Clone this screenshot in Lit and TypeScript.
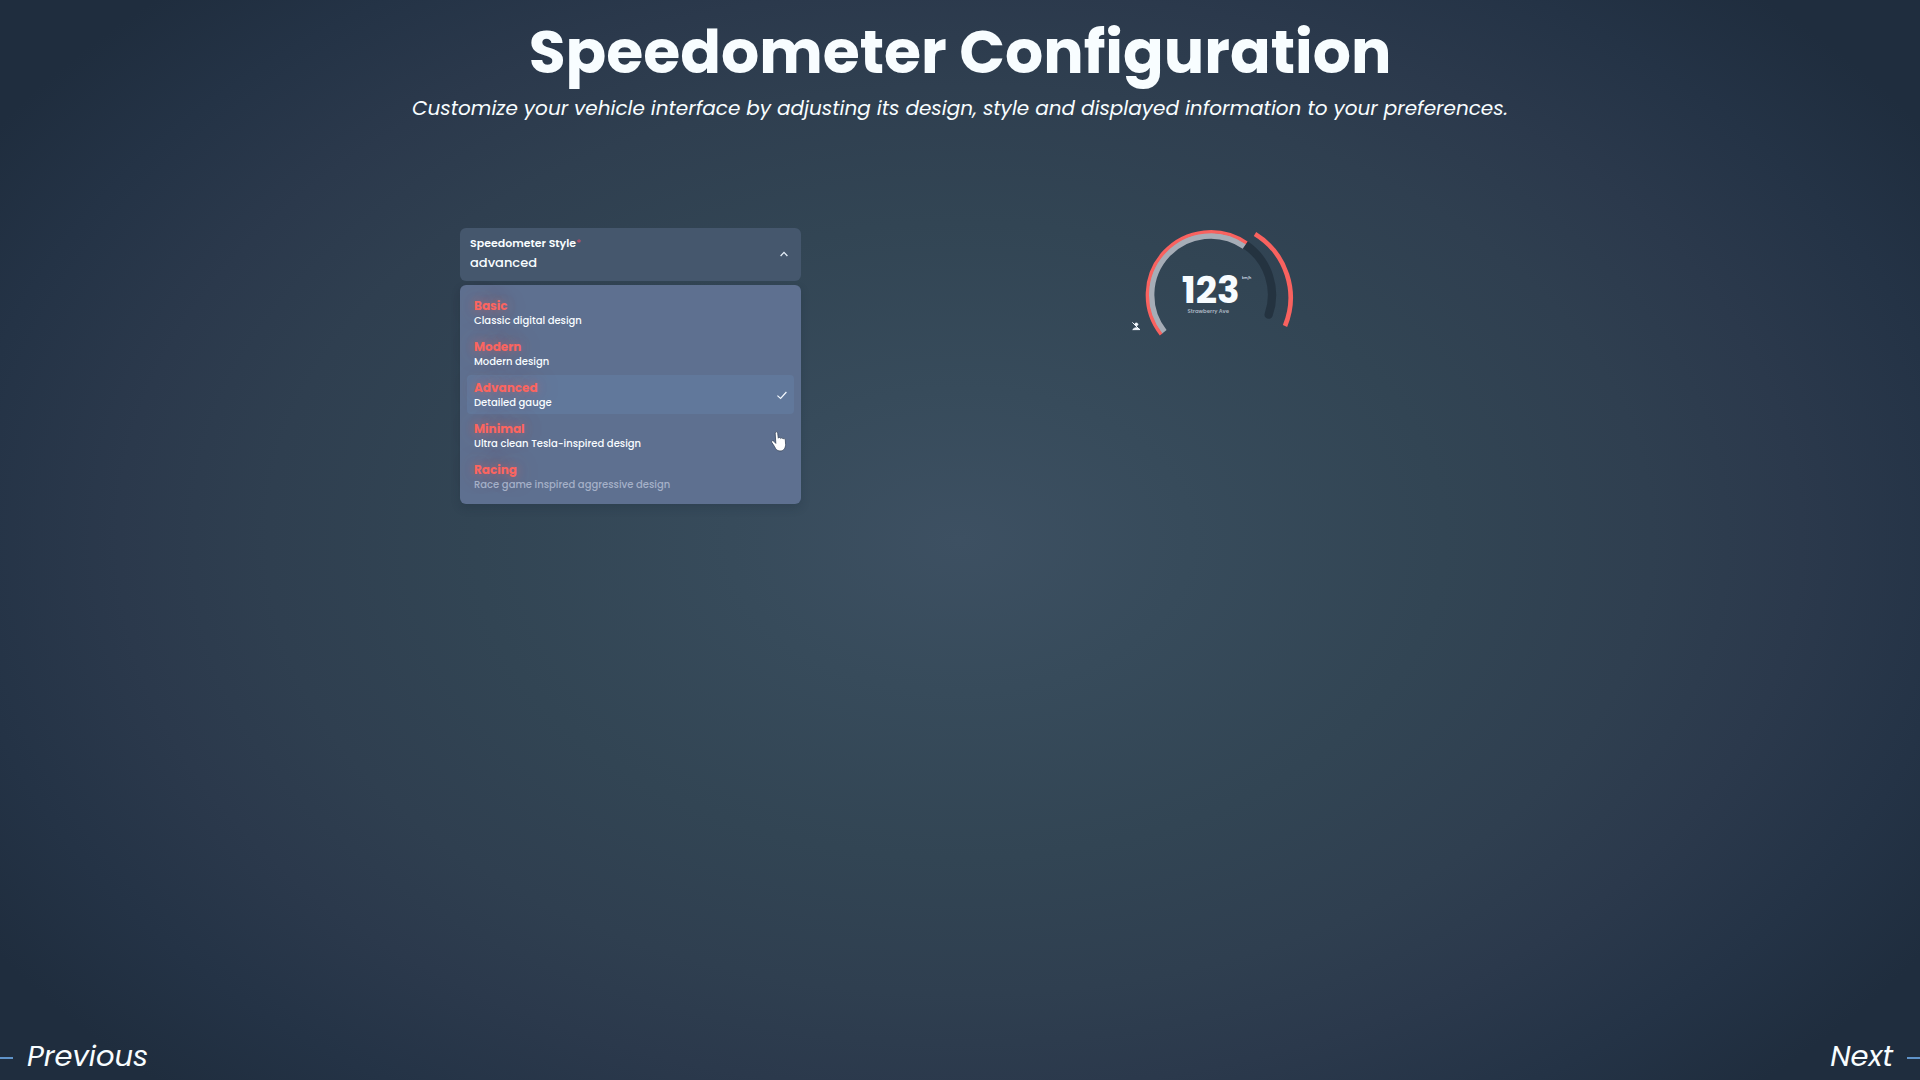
import { LitElement, html, css } from "lit";
import { customElement, state } from "lit/decorators.js";
import { classMap } from "lit/directives/class-map.js";

interface StyleOption {
  value: string;
  title: string;
  description: string;
  dim?: boolean;
}

const OPTIONS: StyleOption[] = [
  { value: "basic", title: "Basic", description: "Classic digital design" },
  { value: "modern", title: "Modern", description: "Modern design" },
  { value: "advanced", title: "Advanced", description: "Detailed gauge" },
  { value: "minimal", title: "Minimal", description: "Ultra clean Tesla-inspired design" },
  { value: "racing", title: "Racing", description: "Race game inspired aggressive design", dim: true },
];

@customElement("style-picker")
export class StylePicker extends LitElement {
  @state() private selected = "advanced";

  static styles = css`
    :host { display: block; position: relative; max-width: 341px; }
    .field {
      display: grid;
      grid-template-columns: 1fr auto;
      align-items: center;
      padding: 6px 10px 8px;
      border-radius: 6px;
      background: #45576d;
    }
    .label { grid-column: 1; font-size: 11px; line-height: 18px; font-weight: 600; }
    .star { color: #c4506a; font-weight: 400; }
    .select {
      grid-column: 1;
      appearance: none;
      border: 0;
      margin: 0;
      padding: 0;
      background: transparent;
      color: inherit;
      font: inherit;
      font-size: 13px;
      line-height: 21px;
      font-weight: 500;
      outline: none;
    }
    .chevron { grid-column: 2; grid-row: 1 / span 2; width: 14px; height: 14px; }
    .list {
      position: absolute;
      top: calc(100% + 4px);
      left: 0;
      right: 0;
      display: flex;
      flex-direction: column;
      gap: 2px;
      padding: 8px 7px;
      border-radius: 6px;
      background: #5e7090;
      box-shadow: 0 4px 10px rgba(20, 35, 50, 0.2);
    }
    .option {
      display: flex;
      align-items: center;
      justify-content: space-between;
      border: 0;
      margin: 0;
      padding: 5px 5px 4px 7px;
      border-radius: 4px;
      background: transparent;
      color: #f8fcff;
      font: inherit;
      text-align: left;
      cursor: pointer;
    }
    .option.active { background: #61789b; }
    .texts { display: flex; flex-direction: column; }
    .title {
      font-size: 12px;
      line-height: 16px;
      font-weight: 700;
      color: #fb6560;
      text-shadow: 0 0 10px rgba(251, 101, 96, 0.4), 0 0 24px rgba(251, 101, 96, 0.4);
    }
    .description { font-size: 10px; line-height: 14px; font-weight: 500; }
    .dim .description { color: #a5b0c8; }
    .check { width: 14px; height: 14px; }
  `;

  render() {
    return html`
      <div class="field">
        <label class="label" for="style">Speedometer Style<span class="star">*</span></label>
        <select class="select" id="style" required
          @change=${(e: Event) => (this.selected = (e.target as HTMLSelectElement).value)}>
          ${OPTIONS.map((o) => html`<option value=${o.value} ?selected=${o.value === this.selected}>${o.value}</option>`)}
        </select>
        <svg class="chevron" viewBox="0 0 14 14" fill="none" stroke="#e4edf6" stroke-width="1.3" aria-hidden="true">
          <path d="M3.6 9 7 5.4 10.4 9" />
        </svg>
      </div>
      <div class="list" role="listbox" aria-label="Speedometer Style">
        ${OPTIONS.map((o) => {
          const active = o.value === this.selected;
          return html`
            <button type="button" role="option" aria-selected=${active}
              class=${classMap({ option: true, active, dim: !!o.dim })}
              @click=${() => (this.selected = o.value)}>
              <span class="texts">
                <span class="title">${o.title}</span>
                <span class="description">${o.description}</span>
              </span>
              ${active
                ? html`<svg class="check" viewBox="0 0 14 14" fill="none" stroke="#f4f9ff" stroke-width="1.2" aria-hidden="true">
                    <path d="M2.4 7.6 5.6 10.4 11.4 4" />
                  </svg>`
                : null}
            </button>`;
        })}
      </div>
    `;
  }
}

@customElement("speed-gauge")
export class SpeedGauge extends LitElement {
  static styles = css`
    :host { display: block; }
    .dial { display: block; width: 190px; height: 130px; }
    .speed { font-size: 112px; font-weight: 700; fill: #f7fcff; }
    .unit { font-size: 10px; font-weight: 600; fill: #d4dee8; }
    .street { font-size: 16px; font-weight: 600; fill: #a9b4c0; }
  `;

  render() {
    return html`
      <svg class="dial" viewBox="-15 0 570 390" fill="none" role="img" aria-label="Speedometer preview">
        <path d="M377 90A181 181 0 0 1 446 299" stroke="#243340" stroke-width="25" stroke-linecap="round" />
        <path d="M132.700 350.800A178 178 0 0 1 373.300 93.700" stroke="#a6adb7" stroke-width="18" />
        <path d="M123.300 358.300A190 190 0 0 1 380.100 83.800" stroke="#f9625f" stroke-width="10" />
        <path d="M405 57A224 224 0 0 1 495 333" stroke="#f9625f" stroke-width="14" />
        <text class="speed" x="272" y="264" text-anchor="middle">123</text>
        <text class="unit" x="366" y="193">km/h</text>
        <text class="street" x="265" y="294" text-anchor="middle">Strawberry Ave</text>
        <g stroke="#f4f9ff" stroke-linecap="round">
          <circle cx="49" cy="328" r="5" fill="#f4f9ff" />
          <path d="M39 343q9-10 20 0z" fill="#f4f9ff" stroke-width="3" />
          <path d="M38 323 58 343" stroke-width="3" />
        </g>
      </svg>
    `;
  }
}

@customElement("app-root")
export class AppRoot extends LitElement {
  static styles = css`
    :host {
      display: flex;
      flex-direction: column;
      min-height: 100vh;
      color: #f8fdff;
      font-family: Poppins, Inter, "Noto Sans", sans-serif;
      background: radial-gradient(ellipse 60% 70% at 50% 50%,
        #3d5062 0%, #374b5b 20%, #324554 42%, #2f3f50 60%, #2b394c 73%, #243346 87%, #1f2d3e 100%);
    }
    .header { text-align: center; padding-top: 12px; }
    .heading { margin: 0; font-size: 60px; line-height: 80px; font-weight: 700; }
    .intro { margin: 0; font-size: 20px; line-height: 32px; font-style: italic; font-weight: 400; }
    .content {
      flex: 1;
      display: grid;
      grid-template-columns: 1fr 1fr;
      align-items: start;
      width: 100%;
      max-width: 1000px;
      margin: 0 auto;
      padding-top: 104px;
    }
    .preview { justify-self: center; margin-top: -13px; }
    .footer { display: flex; justify-content: space-between; }
    .step {
      display: flex;
      align-items: center;
      gap: 14px;
      border: 0;
      padding: 0;
      background: none;
      color: inherit;
      font: inherit;
      font-size: 29px;
      line-height: 48px;
      font-style: italic;
      font-weight: 400;
      cursor: pointer;
    }
    .rule { width: 13px; height: 2px; margin-top: 4px; background: #5f93c9; }
    .pointer { position: absolute; left: 771px; top: 431px; width: 16px; height: 21px; }
  `;

  render() {
    return html`
      <header class="header">
        <h1 class="heading">Speedometer Configuration</h1>
        <p class="intro">Customize your vehicle interface by adjusting its design, style and displayed information to your preferences.</p>
      </header>
      <main class="content">
        <style-picker></style-picker>
        <speed-gauge class="preview"></speed-gauge>
      </main>
      <footer class="footer">
        <button type="button" class="step"><span class="rule"></span>Previous</button>
        <button type="button" class="step">Next<span class="rule"></span></button>
      </footer>
      <svg class="pointer" viewBox="0 0 16 21" fill="#fff" stroke="#39465c" stroke-width=".8" aria-hidden="true">
        <path d="M4.2 2.2c0-1.9 2.4-1.9 2.5 0l.6 5c.4-1.2 2.2-1 2.4.3.6-1.1 2.1-.8 2.3.5.8-.9 2.3-.4 2.3.9l.3 4.500c0 3.700-1.800 6.600-5.600 6.600-3.200 0-4.500-2.200-5.500-4.500L.7 11.300c-.7-1.500 1.300-2.300 2.300-.9l1.800 2z" />
      </svg>
    `;
  }
}
